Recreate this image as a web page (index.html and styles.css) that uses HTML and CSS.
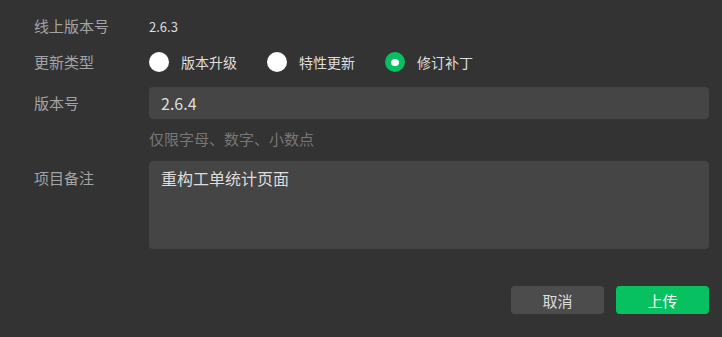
FILE: index.html
```html
<!DOCTYPE html>
<html lang="zh-CN">
<head>
<meta charset="utf-8">
<link rel="stylesheet" href="styles.css">
</head>
<body>
<form class="form">
  <div class="row row-online">
    <div class="label">线上版本号</div>
    <div class="value">2.6.3</div>
  </div>
  <div class="row row-type">
    <div class="label">更新类型</div>
    <div class="radios">
      <label class="radio"><span class="dot"></span><span class="radio-text">版本升级</span></label>
      <label class="radio"><span class="dot"></span><span class="radio-text">特性更新</span></label>
      <label class="radio checked"><span class="dot"></span><span class="radio-text">修订补丁</span></label>
    </div>
  </div>
  <div class="row row-version">
    <div class="label">版本号</div>
    <input class="input" type="text" value="2.6.4">
  </div>
  <div class="row row-hint">
    <div class="label"></div>
    <div class="hint">仅限字母、数字、小数点</div>
  </div>
  <div class="row row-notes">
    <div class="label label-top">项目备注</div>
    <textarea class="textarea">重构工单统计页面</textarea>
  </div>
  <div class="actions">
    <button type="button" class="btn btn-cancel">取消</button>
    <button type="button" class="btn btn-primary">上传</button>
  </div>
</form>
</body>
</html>
```

FILE: styles.css
```css
html, body {
  margin: 0;
  padding: 0;
  background: #333333;
}
body {
  width: 722px;
  height: 337px;
  overflow: hidden;
  font-family: "Noto Sans CJK SC", "Noto Sans", sans-serif;
}
.form {
  display: flex;
  flex-direction: column;
  padding: 12px 13px 0 34px;
}
.row {
  display: flex;
  align-items: center;
}
.label {
  width: 115px;
  flex: none;
  font-size: 15px;
  line-height: 24px;
  color: #a3a3a3;
}
.row-online {
  height: 28px;
}
.value {
  font-size: 13px;
  color: #dddddd;
}
.row-type {
  margin-top: 8px;
  height: 28px;
}
.radios {
  display: flex;
  align-items: center;
  gap: 30px;
}
.radio {
  display: flex;
  align-items: center;
  gap: 12px;
}
.dot {
  width: 20px;
  height: 20px;
  border-radius: 50%;
  background: #ffffff;
  display: flex;
  align-items: center;
  justify-content: center;
}
.radio.checked .dot {
  background: #07c160;
}
.radio.checked .dot::after {
  content: "";
  width: 8px;
  height: 7px;
  border-radius: 50%;
  background: #ffffff;
}
.radio-text {
  font-size: 14px;
  color: #dedede;
  line-height: 20px;
}
.row-version {
  margin-top: 11px;
}
.input {
  flex: 1;
  height: 32px;
  box-sizing: border-box;
  border: none;
  outline: none;
  border-radius: 4px;
  background: #454545;
  color: #dddddd;
  font-family: inherit;
  font-size: 16px;
  padding: 0 12px;
  margin: 0;
}
.row-hint {
  height: 20px;
  margin-top: 9px;
}
.hint {
  font-size: 15px;
  color: #777777;
}
.row-notes {
  margin-top: 13px;
  align-items: flex-start;
}
.label-top {
  padding-top: 5px;
}
.textarea {
  flex: 1;
  height: 88px;
  box-sizing: border-box;
  border: none;
  outline: none;
  resize: none;
  border-radius: 4px;
  background: #454545;
  color: #dddddd;
  font-family: inherit;
  font-size: 16px;
  line-height: 24px;
  padding: 5px 12px;
  margin: 0;
}
.actions {
  display: flex;
  justify-content: flex-end;
  gap: 12px;
  margin-top: 37px;
}
.btn {
  width: 93px;
  height: 28px;
  border: none;
  border-radius: 4px;
  font-family: inherit;
  font-size: 15px;
  padding: 0;
  cursor: pointer;
}
.btn-cancel {
  background: #4c4c4c;
  color: #dddddd;
}
.btn-primary {
  background: #07c160;
  color: #ffffff;
}
```
